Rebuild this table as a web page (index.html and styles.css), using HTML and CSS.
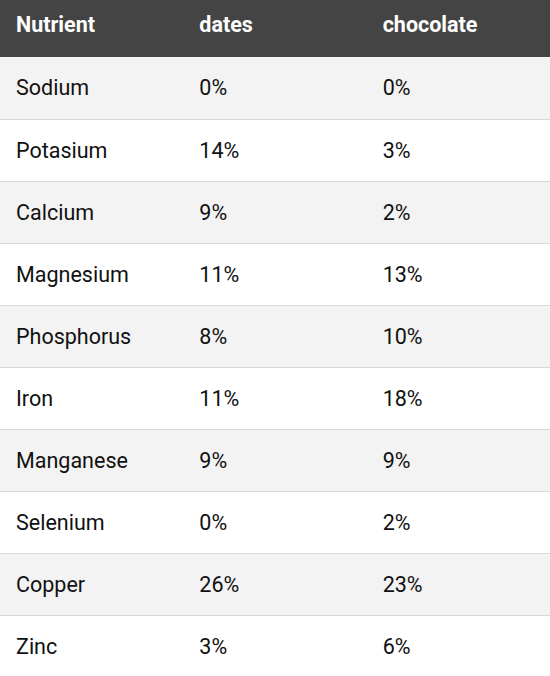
FILE: index.html
```html
<!DOCTYPE html>
<html>
<head>
<meta charset="utf-8">
<link rel="stylesheet" href="styles.css">
</head>
<body>
<table class="nutrients">
  <thead>
    <tr><th>Nutrient</th><th>dates</th><th>chocolate</th></tr>
  </thead>
  <tbody>
    <tr><td>Sodium</td><td>0%</td><td>0%</td></tr>
    <tr><td>Potasium</td><td>14%</td><td>3%</td></tr>
    <tr><td>Calcium</td><td>9%</td><td>2%</td></tr>
    <tr><td>Magnesium</td><td>11%</td><td>13%</td></tr>
    <tr><td>Phosphorus</td><td>8%</td><td>10%</td></tr>
    <tr><td>Iron</td><td>11%</td><td>18%</td></tr>
    <tr><td>Manganese</td><td>9%</td><td>9%</td></tr>
    <tr><td>Selenium</td><td>0%</td><td>2%</td></tr>
    <tr><td>Copper</td><td>26%</td><td>23%</td></tr>
    <tr><td>Zinc</td><td>3%</td><td>6%</td></tr>
  </tbody>
</table>
</body>
</html>
```
FILE: styles.css
```css
html, body {
  margin: 0;
  padding: 0;
  background: #fff;
}
body {
  font-family: Roboto, "Liberation Sans", sans-serif;
  color: #111;
}
.nutrients {
  width: 100%;
  border-collapse: collapse;
  table-layout: fixed;
  font-size: 21.5px;
  line-height: 26px;
}
.nutrients th {
  height: 57px;
  box-sizing: border-box;
  background: #444;
  color: #fff;
  font-weight: 700;
  text-align: left;
  vertical-align: top;
  padding: 12px 16px 19px;
}
.nutrients td {
  height: 62px;
  box-sizing: border-box;
  padding: 18px 16px 17px;
  border-bottom: 1px solid #d9d9d9;
}
.nutrients tbody tr:nth-child(odd) td {
  background: #f3f3f3;
}
```
